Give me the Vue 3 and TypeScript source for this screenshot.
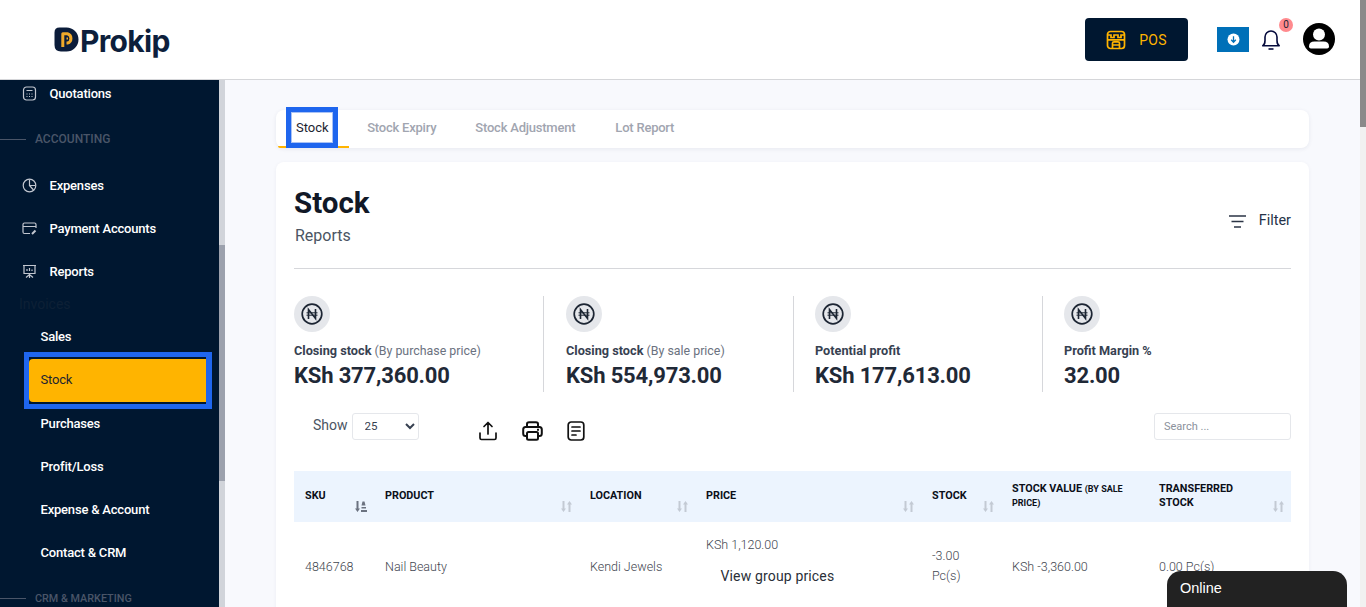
<script setup lang="ts">
interface NavItem { label: string; icon: string }
const topItems: NavItem[] = [
  { label: 'Expenses', icon: 'pie' },
  { label: 'Payment Accounts', icon: 'card' },
  { label: 'Reports', icon: 'board' },
]
const subItems = ['Sales', 'Stock', 'Purchases', 'Profit/Loss', 'Expense & Account', 'Contact & CRM']
const tabs = ['Stock', 'Stock Expiry', 'Stock Adjustment', 'Lot Report']
const stats = [
  { title: 'Closing stock', note: '(By purchase price)', value: 'KSh 377,360.00', w: 250, pad: 0 },
  { title: 'Closing stock', note: '(By sale price)', value: 'KSh 554,973.00', w: 250, pad: 22 },
  { title: 'Potential profit', note: '', value: 'KSh 177,613.00', w: 249, pad: 21 },
  { title: 'Profit Margin %', note: '', value: '32.00', w: 248, pad: 21 },
]
</script>

<template>
  <div class="page">
    <div class="shell">
      <header class="topbar">
        <div class="logo">
          <svg class="logo-mark" width="25" height="25" viewBox="0 0 25 25">
            <path d="M0.500 5.500 Q0.500 0.500 5.500 0.500 H12.500 A12 12 0 0 1 24.500 12.500 A12 12 0 0 1 12.500 24.500 H7 Q0.500 24.500 0.500 18 Z" fill="#0b1c3a" />
            <path d="M8.800 20 V6.800 H13.500 A4.800 4.800 0 0 1 13.500 16 H12.500" fill="none" stroke="#f0a92a" stroke-width="3" stroke-linejoin="round" />
            <path d="M12.500 11.500 H14" fill="none" stroke="#f0a92a" stroke-width="1.800" />
          </svg>
          <span class="logo-text">Prokip</span>
        </div>
        <div class="top-actions">
          <button class="pos">
            <svg width="20" height="20" viewBox="0 0 20 20" fill="none" stroke="#ffb400" stroke-width="1.700">
              <rect x="1.500" y="1.500" width="17" height="17" rx="3" />
              <path d="M2 5 H5 V7.500 H8 V5 H12 V7.500 H15 V5 H18 M1.500 9.800 H18.500" />
              <path d="M6.500 18 V13 Q6.500 11.800 8 11.800 H12 Q13.500 11.800 13.500 13 V18 M6.500 15 H13.500" />
            </svg>
            <span>POS</span>
          </button>
          <div class="download">
            <svg width="13" height="13" viewBox="0 0 13 13">
              <circle cx="6.500" cy="6.500" r="6" fill="#fff" />
              <path d="M6.500 3.200 V9 M4.200 6.800 L6.500 9.200 L8.800 6.800" fill="none" stroke="#0070b8" stroke-width="1.300" />
            </svg>
          </div>
          <div class="bell">
            <svg width="18" height="20" viewBox="0 0 18 20" fill="none" stroke="#050a3c" stroke-width="1.600">
              <path d="M0.800 15.800 H17.200 Q15 14.500 15 10.500 V7 A6 6 0 0 0 3 7 V10.500 Q3 14.500 0.800 15.800 Z" stroke-linejoin="round" />
              <path d="M6.500 19 H11.500" />
            </svg>
            <span class="badge">0</span>
          </div>
          <svg class="avatar" width="32" height="32" viewBox="0 0 32 32">
            <circle cx="16" cy="16" r="16" fill="#000" />
            <circle cx="16" cy="11.500" r="6" fill="#fff" />
            <path d="M6 23.500 Q6 18.500 11.500 18.500 H20.500 Q26 18.500 26 23.500 Q26 25.500 23 25.500 H9 Q6 25.500 6 23.500 Z" fill="#fff" />
          </svg>
        </div>
      </header>

      <div class="body-row">
        <aside class="sidebar">
          <nav class="nav">
            <a class="nav-item first">
              <svg class="nav-icon" width="15" height="15" viewBox="0 0 15 15" fill="none" stroke="#c2c7d0" stroke-width="1.200">
                <rect x="1.500" y="1" width="12" height="13" rx="3" />
                <path d="M4.500 4.500 H10.500 M4.500 8 H5.500 M7 8 H8 M9.500 8 H10.500 M4.500 10.500 H5.500 M7 10.500 H8 M9.500 10.500 H10.500" />
              </svg>
              <span>Quotations</span>
            </a>
            <div class="section accounting"><i></i><span>ACCOUNTING</span></div>
            <a v-for="item in topItems" :key="item.label" class="nav-item">
              <svg v-if="item.icon === 'pie'" class="nav-icon" width="15" height="15" viewBox="0 0 15 15" fill="none" stroke="#c2c7d0" stroke-width="1.200">
                <circle cx="7.500" cy="7.500" r="6.300" />
                <path d="M7.500 1.500 V7.500 H13.500 M7.500 7.500 L11.500 12" />
              </svg>
              <svg v-else-if="item.icon === 'card'" class="nav-icon" width="15" height="15" viewBox="0 0 15 15" fill="none" stroke="#c2c7d0" stroke-width="1.200">
                <path d="M8 12.500 H2.500 Q1 12.500 1 11 V3.500 Q1 2 2.500 2 H12.500 Q14 2 14 3.500 V7 M1 5.500 H14" />
                <path d="M10 13 L13.500 9.500" stroke-width="2" />
              </svg>
              <svg v-else class="nav-icon" width="15" height="15" viewBox="0 0 15 15" fill="none" stroke="#c2c7d0" stroke-width="1.200">
                <path d="M1 1.500 H14 M2 1.500 V9.500 H13 V1.500 M7.500 9.500 V14 M4 13.500 L7.500 10.500 L11 13.500 M5 7 V5 M7.500 7 V4 M10 7 V5.500" />
              </svg>
              <span>{{ item.label }}</span>
            </a>
            <div class="invoices">Invoices</div>
            <ul class="sub-list">
              <li v-for="s in subItems" :key="s" class="sub-item" :class="{ active: s === 'Stock' }"><span>{{ s }}</span></li>
            </ul>
            <div class="section crm"><i></i><span>CRM &amp; MARKETING</span></div>
          </nav>
          <div class="side-scroll"><div class="side-thumb"></div></div>
        </aside>

        <main class="main">
          <div class="tabs">
            <a v-for="(t, i) in tabs" :key="t" class="tab" :class="{ current: i === 0 }">{{ t }}</a>
          </div>

          <section class="card">
            <div class="card-head">
              <div>
                <h1>Stock</h1>
                <p>Reports</p>
              </div>
              <div class="filter">
                <svg width="17" height="13" viewBox="0 0 17 13" stroke="#2b3445" stroke-width="1.700">
                  <path d="M0 1 H17 M2.500 6.500 H14.500 M5 12 H12" />
                </svg>
                <span>Filter</span>
              </div>
            </div>

            <div class="stats">
              <div v-for="s in stats" :key="s.value" class="stat" :style="{ width: s.w + 'px', paddingLeft: s.pad + 'px' }">
                <div class="coin">
                  <svg width="22" height="22" viewBox="0 0 22 22" fill="none" stroke="#1c2533">
                    <circle cx="11" cy="11" r="9.800" stroke-width="1.700" />
                    <path d="M7.500 16 V6.500 L14.500 15.500 V6" stroke-width="1.600" />
                    <path d="M5.500 9.800 H16.500 M5.500 12.200 H16.500" stroke-width="1" />
                  </svg>
                </div>
                <div class="stat-label"><b>{{ s.title }}</b> {{ s.note }}</div>
                <div class="stat-value">{{ s.value }}</div>
              </div>
            </div>

            <div class="toolbar">
              <label class="show"><span>Show</span>
                <select class="show-select"><option>25</option></select>
              </label>
              <div class="tools">
                <svg width="20" height="20" viewBox="0 0 20 20" fill="none" stroke="#111" stroke-width="1.700" stroke-linecap="round" stroke-linejoin="round">
                  <path d="M10 13 V2 M6 5.500 L10 1.500 L14 5.500 M2 12 V17 Q2 18.500 3.500 18.500 H16.500 Q18 18.500 18 17 V12" />
                </svg>
                <svg width="21" height="20" viewBox="0 0 21 20" fill="none" stroke="#111" stroke-width="2" stroke-linejoin="round">
                  <path d="M5 6 V3 Q5 1.200 7 1.200 H14 Q16 1.200 16 3 V6 M5 15 H3.500 Q1.200 15 1.200 12.500 V8.500 Q1.200 6 3.500 6 H17.500 Q19.800 6 19.800 8.500 V12.500 Q19.800 15 17.500 15 H16" />
                  <rect x="5" y="11" width="11" height="7.800" rx="1.500" />
                  <path d="M15 8.800 H17" />
                </svg>
                <svg class="note" width="18" height="20" viewBox="0 0 18 20" fill="none" stroke="#111" stroke-width="1.700" stroke-linecap="round">
                  <rect x="1.200" y="1" width="15.600" height="18" rx="3" />
                  <path d="M5 6 H13 M5 10 H13 M5 14 H9" />
                </svg>
              </div>
              <input class="search" placeholder="Search ..." />
            </div>

            <table class="report">
              <colgroup>
                <col style="width: 80px" /><col style="width: 205px" /><col style="width: 116px" /><col style="width: 226px" />
                <col style="width: 80px" /><col style="width: 147px" /><col style="width: 143px" />
              </colgroup>
              <thead>
                <tr>
                  <th>SKU<span class="sort">
                    <svg width="12" height="11" viewBox="0 0 12 11" fill="#6b7280"><path d="M1.500 0 H3.500 V7.500 H5 L2.500 11 L0 7.500 H1.500 Z M7.500 0.500 H9.500 L10.500 4.500 H6.500 Z M6.500 6 H11 V7.500 H6.500 Z M6 9 H12 V11 H6 Z" /></svg>
                  </span></th>
                  <th v-for="h in ['PRODUCT', 'LOCATION', 'PRICE', 'STOCK']" :key="h">{{ h }}<span class="sort">
                    <svg width="11" height="11" viewBox="0 0 11 11" fill="#c3cad4"><path d="M1.500 0 H3.500 V7.500 H5 L2.500 11 L0 7.500 H1.500 Z M7.500 11 H9.500 V3.500 H11 L8.500 0 L6 3.500 H7.500 Z" /></svg>
                  </span></th>
                  <th class="value-head">STOCK VALUE <small>(BY SALE PRICE)</small></th>
                  <th>TRANSFERRED STOCK<span class="sort">
                    <svg width="11" height="11" viewBox="0 0 11 11" fill="#c3cad4"><path d="M1.500 0 H3.500 V7.500 H5 L2.500 11 L0 7.500 H1.500 Z M7.500 11 H9.500 V3.500 H11 L8.500 0 L6 3.500 H7.500 Z" /></svg>
                  </span></th>
                </tr>
              </thead>
              <tbody>
                <tr>
                  <td>4846768</td>
                  <td>Nail Beauty</td>
                  <td>Kendi Jewels</td>
                  <td class="price"><div>KSh 1,120.00</div><div class="group">View group prices</div></td>
                  <td class="stock-cell">-3.00 Pc(s)</td>
                  <td>KSh -3,360.00</td>
                  <td>0.00 Pc(s)</td>
                </tr>
              </tbody>
            </table>
          </section>
        </main>
      </div>
    </div>

    <div class="page-scroll"><div class="page-thumb"></div></div>
    <div class="online">Online</div>
  </div>
</template>

<style>
html, body { margin: 0; height: 607px; overflow: hidden; }
</style>

<style scoped>
* { box-sizing: border-box; }
.page { display: flex; width: 1366px; height: 607px; overflow: hidden; font-family: Roboto, "Liberation Sans", sans-serif; background: #f8f9fd; }
.shell { flex: 1; min-width: 0; display: flex; flex-direction: column; }
.topbar { height: 80px; flex: none; background: #fff; border-bottom: 1px solid #d5d6d9; display: flex; align-items: center; justify-content: space-between; padding: 0 25px 0 54px; }
.logo { display: flex; align-items: center; margin-top: 3px; }
.logo-mark { display: block; margin-top: -3px; }
.logo-text { font-family: Inter, sans-serif; font-weight: 700; font-size: 30px; letter-spacing: -.65px; color: #0d1f3c; line-height: 1; margin-top: -1px; margin-left: 1px; }
.top-actions { display: flex; align-items: center; }
.pos { width: 103px; height: 43px; margin: 0 29px 0 0; border: 0; border-radius: 4px; background: #001730; color: #ffb400; display: flex; align-items: center; justify-content: center; gap: 13px; font: 400 14px Roboto, sans-serif; letter-spacing: .3px; padding: 0; }
.download { width: 32px; height: 25px; background: #0070b8; display: flex; align-items: center; justify-content: center; margin-right: 13px; }
.bell { position: relative; width: 18px; height: 20px; margin-right: 23px; }
.bell svg { display: block; }
.badge { position: absolute; left: 17px; top: -12px; width: 14px; height: 14px; border-radius: 50%; background: #ff8a8e; color: #1d2433; font-size: 10px; line-height: 14px; text-align: center; }
.avatar { display: block; margin-top: -1px; }

.body-row { flex: 1; min-height: 0; display: flex; }
.sidebar { width: 225px; flex: none; display: flex; overflow: hidden; background: #001730; }
.nav { width: 219px; flex: none; color: #fff; font-size: 13px; font-weight: 500; letter-spacing: -.2px; }
.nav-item { display: flex; align-items: center; height: 43px; padding-left: 22px; color: #fff; }
.nav-item.first { height: 26px; }
.nav-icon { flex: none; margin-right: 12.500px; display: block; }
.section { display: flex; align-items: center; height: 30px; font-size: 12px; color: #4a5568; font-weight: 500; letter-spacing: 0; }
.section i { width: 26px; height: 1px; background: #4a5568; margin-right: 9px; }
.accounting { margin: 18px 0 10px; }
.invoices { font-size: 14px; color: #0d2036; padding-left: 19px; height: 22px; line-height: 22px; font-weight: 400; letter-spacing: 0; }
.sub-list { list-style: none; margin: 0; padding: 0; }
.sub-item { height: 43px; display: flex; align-items: center; padding-left: 40.500px; }
.sub-item.active { width: 188px; margin-left: 24px; padding: 0; height: 57px; margin-top: -6px; margin-bottom: -7px; background: #001730; color: #1c2430; font-weight: 400; border: 5px solid #1f66ee; border-right-width: 6px; align-items: stretch; }
.sub-item.active span { flex: 1; margin: 2px 0; padding: 0 0 2px 11.500px; display: flex; align-items: center; background: #ffb400; border-radius: 4px 0 0 4px; }
.side-scroll { width: 6px; flex: none; background: #d1d4da; }
.side-thumb { height: 236px; margin-top: 165px; background: #9ca1ad; }
.crm { margin-top: 9px; font-size: 10.800px; }

.main { flex: 1; min-width: 0; padding: 30px 51px 0; overflow: hidden; }
.tabs { height: 38px; background: #fff; border-radius: 8px; box-shadow: 0 1px 4px rgba(30, 40, 80, .08); display: flex; padding-left: 10px; font-size: 13px; }
.tab { height: 38px; line-height: 36px; color: #a1a5b0; font-weight: 500; margin-right: 39px; white-space: nowrap; letter-spacing: -.22px; }
.tab:nth-child(3) { margin-right: 40px; }
.tab.current { position: relative; color: #1c2430; font-weight: 400; margin-right: 28.500px; padding: 0 10px; letter-spacing: 0; }
.tab.current::after { content: ""; position: absolute; left: -8px; right: -10px; bottom: 0; height: 2px; background: #ffb400; border-radius: 0 0 0 6px; }
.tab.current::before { content: ""; position: absolute; z-index: 1; left: 0; top: -3px; width: 52px; height: 41px; box-sizing: border-box; border: 5px solid #1f66ee; box-shadow: inset 0 0 0 1px #a9c2f5; }
.card { margin-top: 14px; background: #fff; border-radius: 8px; padding: 18px 18px 0; height: 500px; box-shadow: 0 1px 4px rgba(30, 40, 80, .05); }
.card-head { height: 89px; border-bottom: 1px solid #d6d7db; display: flex; justify-content: space-between; align-items: flex-start; }
h1 { margin: 7px 0 0; font-size: 29.500px; line-height: 33px; font-weight: 700; color: #111827; }
p { margin: 6px 0 0 1px; font-size: 16px; line-height: 20px; color: #4b5563; }
.filter { display: flex; align-items: center; gap: 13px; margin-top: 31px; font-size: 14.400px; color: #253248; line-height: 20px; }
.filter svg { display: block; }
.stats { display: flex; margin-top: 27px; height: 96px; }
.stat { height: 96px; border-right: 1px solid #d6d7db; }
.stat:last-child { border-right: 0; }
.coin { width: 36px; height: 36px; border-radius: 50%; background: #e5e7eb; display: flex; align-items: center; justify-content: center; }
.stat-label { font-size: 12.400px; line-height: 16px; margin-top: 11px; color: #6b7280; white-space: nowrap; }
.stat-label b { color: #374151; font-weight: 700; font-size: 12.700px; }
.stat-value { font-size: 22px; line-height: 28px; margin-top: 3px; font-weight: 700; color: #1f2937; white-space: nowrap; letter-spacing: -.17px; }
.toolbar { display: flex; align-items: center; height: 28px; margin-top: 20px; }
.show { width: 184px; padding-left: 19px; display: flex; align-items: center; gap: 4px; font-size: 14px; color: #4b5563; }
.show span { margin-top: -3px; }
.show-select { width: 67px; height: 27px; border: 1px solid #e5e7eb; border-radius: 3px; background: #fff; font: 11.500px Roboto, sans-serif; color: #374151; padding-left: 8px; }
.tools { display: flex; align-items: center; gap: 24px; flex: 1; padding-top: 9px; height: 28px; }
.tools svg { display: block; flex: none; }
.search { width: 137px; height: 27px; border: 1px solid #e5e7eb; border-radius: 3px; padding: 0 9px; font: 11px Roboto, sans-serif; color: #6b7280; }
.search::placeholder { color: #8b919c; opacity: 1; }
.report { table-layout: fixed; width: 997px; border-collapse: collapse; margin-top: 31px; }
th { position: relative; background: #ecf4fe; height: 51px; padding: 0 32px 2px 11px; font-size: 10.800px; line-height: 14px; font-weight: 700; color: #0b0f19; text-align: left; vertical-align: middle; }
.value-head { padding-right: 8px; }
th small { font-size: 9px; font-weight: 700; }
.sort { position: absolute; right: 7px; top: 29.500px; line-height: 0; }
td { padding: 0 11px; height: 90px; font-size: 12.500px; line-height: 20px; font-weight: 300; color: #3f4650; vertical-align: middle; }
.price { padding-bottom: 14px; }
.group { padding-left: 14.500px; margin-top: 11px; font-size: 14px; font-weight: 400; color: #2a2f38; letter-spacing: .15px; }
.stock-cell { padding-right: 20px; padding-bottom: 2px; }

.page-scroll { width: 6px; flex: none; background: #f1f1f1; }
.page-thumb { height: 127px; background: #8a8a8a; }
.online { position: fixed; right: 19px; bottom: 0; width: 180px; height: 36px; padding: 8px 13px 0; background: #222; border-radius: 14px 14px 0 0; color: #fff; font: 14.500px/18px "Liberation Sans", sans-serif; }
</style>
